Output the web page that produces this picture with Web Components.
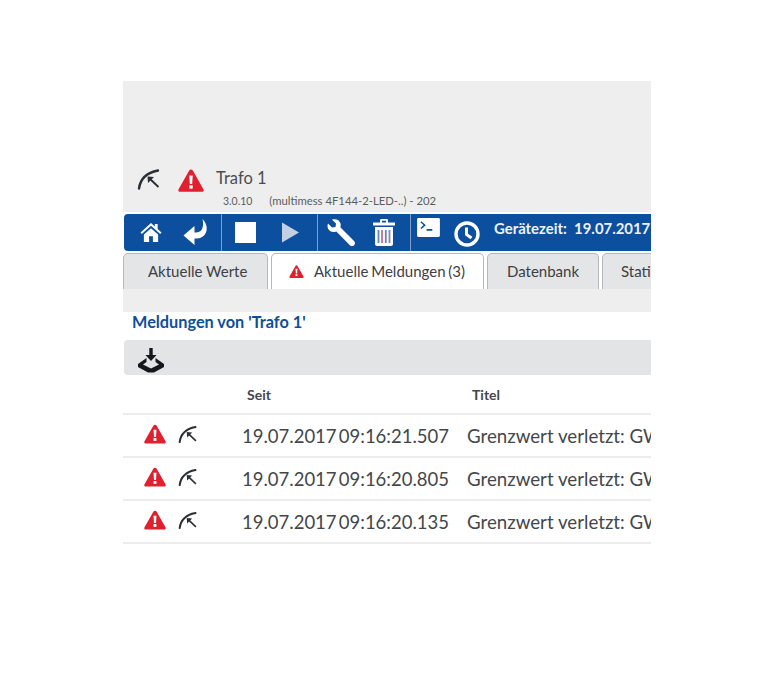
<!DOCTYPE html>
<html lang="de">
<head>
<meta charset="utf-8">
<title>Meldungen</title>
<style>
  html, body { margin: 0; background: #fff; }
  body { padding: 81px 0 0 123px; font-family: Lato, "Liberation Sans", sans-serif; color: #3c4043; }
  app-frame { width: 528px; }
</style>
</head>
<body>
<app-frame>
  <device-header name="Trafo 1" version="3.0.10" detail="(multimess 4F144-2-LED-..) - 202"></device-header>
  <tool-bar time="Gerätezeit:&nbsp; 19.07.2017"></tool-bar>
  <tab-bar></tab-bar>
  <message-list title="Meldungen von 'Trafo 1'"></message-list>
</app-frame>

<script>
const ICONS = {
  alert: `<svg viewBox="0 0 26 23" width="100%" height="100%"><path d="M13 .5c.8 0 1.4.4 1.8 1.1l10.6 18.6c.8 1.4-.1 2.6-1.6 2.6H2.2C.7 22.800-.2 21.600.6 20.200L11.200 1.600C11.600.9 12.200.5 13 .5z" fill="#e0202f"/><path d="M11.300 6.500h3.400l-.5 8.500h-2.400z" fill="#fff"/><rect x="11.300" y="16.300" width="3.400" height="3.300" fill="#fff"/></svg>`,
  gauge: `<svg viewBox="0 0 24 24" width="100%" height="100%" fill="none" stroke="#2b2f33"><path d="M2 20.500C3 13 8 5 21 2.500" stroke-width="2.400" stroke-linecap="round"/><path d="M21.500 19L12 10" stroke-width="1.900"/><path d="M10.500 8.500l6.500.5-6 6z" fill="#2b2f33" stroke="none"/></svg>`
};

class AppFrame extends HTMLElement {
  constructor() {
    super();
    this.attachShadow({ mode: "open" });
    this.shadowRoot.innerHTML = `
      <style>
        :host { display: block; overflow: hidden; }
      </style>
      <slot></slot>
    `;
  }
}

class DeviceHeader extends HTMLElement {
  constructor() {
    super();
    this.attachShadow({ mode: "open" });
    this.shadowRoot.innerHTML = `
      <style>
        :host { display: block; height: 131px; background: #eeeeee; box-sizing: border-box; padding: 84px 0 0 14px; }
        .top { display: flex; align-items: center; height: 30px; }
        .gauge { width: 24px; height: 24px; }
        .alert { width: 26px; height: 23px; margin-left: 17px; }
        .name { margin-left: 12px; font-size: 16.500px; color: #4a4d50; position: relative; top: -2px; }
        .sub { display: flex; align-items: baseline; margin: -1px 0 0 86px; font-size: 10.500px; color: #5a5d60; }
        .sub span + span { margin-left: 17px; font-size: 11.300px; }
      </style>
      <div class="top">
        <div class="gauge">${ICONS.gauge}</div>
        <div class="alert">${ICONS.alert}</div>
        <div class="name">${this.getAttribute("name")}</div>
      </div>
      <div class="sub"><span>${this.getAttribute("version")}</span><span>${this.getAttribute("detail")}</span></div>
    `;
  }
}

class ToolBar extends HTMLElement {
  constructor() {
    super();
    this.attachShadow({ mode: "open" });
    this.shadowRoot.innerHTML = `
      <style>
        :host { display: flex; height: 37px; margin: 2px 0 0 1px; background: #0b4f9e; border-radius: 4px 0 0 4px; color: #fff; white-space: nowrap; overflow: hidden; }
        .group { display: flex; align-items: center; height: 100%; box-sizing: border-box; border-right: 1px solid #7f9fc8; flex: none; }
        svg { display: block; flex: none; }
        .time { font-size: 14.900px; font-weight: 700; margin: 1px 0 0 14px; color: #eef3fa; }
      </style>
      <div class="group" style="width:98px;padding-left:16px">
        <svg width="22" height="19" viewBox="0 0 22 20" fill="#fff"><path d="M11 0L0 10l1.300 1.500L11 3l9.700 8.500L22 10l-4-3.600V1h-3v2.700z"/><path d="M3.500 12L11 5.400 18.500 12v8h-5.500v-6H9v6H3.500z"/></svg>
        <svg width="25" height="27" viewBox="0 0 24 27" fill="#fff" style="margin-left:21px"><path d="M19 0c5 5 5.500 12 2 16-2.500 3-6 3.500-10 3.500V26L0 16.500 11 7v6.500c3 0 5.500-.3 7-2.500 1.800-2.800 2-7 1-11z"/></svg>
      </div>
      <div class="group" style="width:96px;padding-left:13px">
        <svg width="21" height="21"><rect width="21" height="21" fill="#fff"/></svg>
        <svg width="17" height="21" viewBox="0 0 18 21" style="margin-left:26px"><path d="M0 0l18 10.500L0 21z" fill="#c3d0e3"/></svg>
      </div>
      <div class="group" style="width:93px;padding-left:9px">
        <svg width="28" height="28" viewBox="0 0 28 28" fill="#fff"><path d="M1 4.500L5 8.500l3.500-.5.5-3.500L5 .8C8.500-.6 12.500 1 13.500 4.500c.4 1.500.2 2.800-.2 3.800L27 22c1.300 1.300 1.300 3 .1 4.200-1.200 1.200-3 1.200-4.200 0L9.300 12.400C6.200 13.700 2.800 12.800 1.200 10 .3 8.300.3 6.200 1 4.500z"/></svg>
        <svg width="22" height="27" viewBox="0 0 22 27" style="margin-left:18px"><path fill="#fff" d="M0 3.500h7V1.300C7 .6 7.600 0 8.300 0h5.400C14.400 0 15 .6 15 1.300v2.200h7v3H0zM9 1.800v1.700h4V1.800z"/><path fill="#fff" d="M2 8h18v17c0 1.100-.9 2-2 2H4c-1.100 0-2-.9-2-2z"/><path d="M5.500 11v13" stroke="#5f86c0" stroke-width="1.800"/><path d="M9 11v13" stroke="#c2708c" stroke-width="1.800"/><path d="M12.800 11v13" stroke="#5f86c0" stroke-width="1.800"/><path d="M16.500 11v13" stroke="#8f7fb8" stroke-width="1.800"/></svg>
      </div>
      <div style="display:flex;align-items:flex-start;padding:4px 0 0 6px">
        <svg width="23" height="19" viewBox="0 0 24 20"><rect width="24" height="20" rx="1.500" fill="#fff"/><path d="M4 4l4 3.500L4 11" fill="none" stroke="#0b4f9e" stroke-width="1.600"/><path d="M10 12.500h6" stroke="#0b4f9e" stroke-width="1.600"/></svg>
        <svg width="26" height="26" viewBox="0 0 26 26" fill="none" stroke="#fff" style="margin:3px 0 0 14px"><circle cx="13" cy="13" r="11" stroke-width="3.400"/><path d="M12.500 6.500v7l5 3.500" stroke-width="3"/></svg>
        <div class="time">${this.getAttribute("time")}</div>
      </div>
    `;
  }
}

class TabBar extends HTMLElement {
  constructor() {
    super();
    this.attachShadow({ mode: "open" });
    this.shadowRoot.innerHTML = `
      <style>
        :host { display: block; height: 59px; margin-top: 2px; box-sizing: border-box; background: linear-gradient(#fff 36px, #eeeeee 36px); white-space: nowrap; overflow: hidden; }
        .tabs { display: flex; height: 36px; gap: 3px; }
        .tab { box-sizing: border-box; height: 36px; display: flex; align-items: center; flex: none; border: 1px solid #b5b8bc; border-bottom: 0; border-radius: 5px 5px 0 0; background: #e4e5e7; font-size: 15px; color: #3c4043; padding-bottom: 2px; }
        .tab.active { background: #fff; word-spacing: -1px; }
        .alert { width: 15px; height: 13px; margin: -3px 10px 0 0; }
      </style>
      <div class="tabs">
        <div class="tab" style="width:145px;padding-left:24px">Aktuelle Werte</div>
        <div class="tab active" style="width:213px;padding-left:17px"><span class="alert">${ICONS.alert}</span>Aktuelle Meldungen (3)</div>
        <div class="tab" style="width:112px;padding-left:19px">Datenbank</div>
        <div class="tab" style="width:60px;padding-left:18px">Statistik</div>
      </div>
    `;
  }
}

class MessageList extends HTMLElement {
  constructor() {
    super();
    this.attachShadow({ mode: "open" });
    const rows = ["19.07.2017 09:16:21.507", "19.07.2017 09:16:20.805", "19.07.2017 09:16:20.135"];
    this.shadowRoot.innerHTML = `
      <style>
        :host { display: block; white-space: nowrap; }
        h2 { margin: 0; height: 28px; padding-left: 9px; box-sizing: border-box; line-height: 20px; font-size: 16.300px; font-weight: 700; color: #0e4f9b; }
        .actions { display: flex; align-items: center; height: 35px; padding-left: 13px; border-radius: 4px 0 0 4px; background: #e3e4e6; margin-left: 1px; }
        .actions svg { display: block; margin-top: 5px; }
        .row { display: grid; grid-template-columns: 119px 225px 1fr; align-items: center; height: 43px; border-bottom: 2px solid #ececec; box-sizing: border-box; overflow: hidden; font-size: 18.700px; color: #43474a; }
        .row.head { height: 40px; font-size: 14px; font-weight: 700; }
        .row.head div:first-child { padding-left: 124px; }
        .cols { display: flex; align-items: center; padding-left: 21px; }
        .alert { width: 22px; height: 20px; margin-top: -3px; }
        .gauge { width: 20px; height: 20px; margin: -2px 0 0 12px; }
        .date { font-size: 18.500px; word-spacing: -2.500px; }
      </style>
      <h2>${this.getAttribute("title")}</h2>
      <div class="actions">
        <svg width="28" height="25" viewBox="0 0 28 25"><path d="M9.500 10L1 16v3l10 5.500h6L27 19v-3l-8.500-6v4l3.500 2.500-8 4-8-4L9.500 14z" fill="#15181b"/><path d="M12.300 0h3.400v7h3.800L14 13 8.500 7h3.800z" fill="#15181b"/></svg>
      </div>
      <div class="row head" style="grid-template-columns:349px 1fr"><div>Seit</div><div>Titel</div></div>
      ${rows.map(r => `
        <div class="row">
          <div class="cols"><div class="alert">${ICONS.alert}</div><div class="gauge">${ICONS.gauge}</div></div>
          <div class="date">${r}</div>
          <div>Grenzwert verletzt: GW</div>
        </div>`).join("")}
    `;
  }
}

customElements.define("app-frame", AppFrame);
customElements.define("device-header", DeviceHeader);
customElements.define("tool-bar", ToolBar);
customElements.define("tab-bar", TabBar);
customElements.define("message-list", MessageList);
</script>
</body>
</html>
